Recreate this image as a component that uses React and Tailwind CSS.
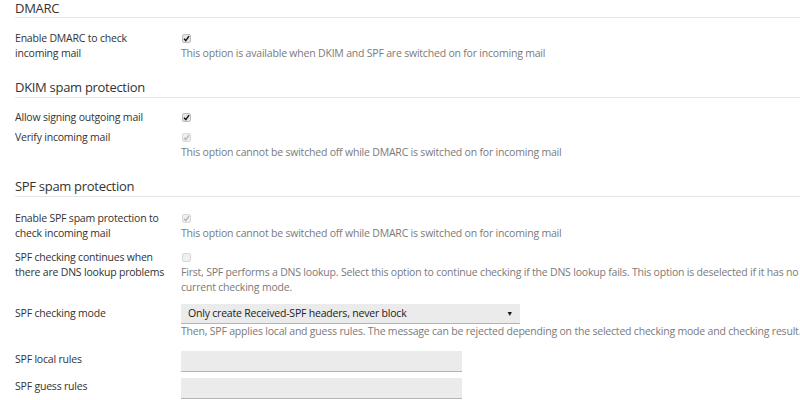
import React from "react";

function Check({ checked, disabled }) {
  return (
    <span
      className={`inline-flex items-center justify-center w-[9px] h-[9px] rounded-[2px] border ${
        disabled ? "border-[#d8d8d8] bg-[#f0f0f0]" : "border-[#bcbcbc] bg-[#e6e6e6]"
      }`}
    >
      {checked && (
        <svg width="7" height="7" viewBox="0 0 7 7">
          <path
            d="M1 3.8 L2.8 5.6 L6 1.2"
            fill="none"
            stroke={disabled ? "#b5b5b5" : "#111"}
            strokeWidth="1.4"
          />
        </svg>
      )}
    </span>
  );
}

function Heading({ children, className = "" }) {
  return (
    <div
      className={`ml-[15px] border-b border-[#e6e6e6] text-[13px] tracking-[-0.3px] text-[#333] ${className}`}
    >
      {children}
    </div>
  );
}

function Row({ label, children, className = "" }) {
  return (
    <div className={`flex pl-[15px] text-[10.5px] tracking-[-0.2px] leading-[15px] ${className}`}>
      <div className="w-[166px] shrink-0 text-[#333]">{label}</div>
      <div className="flex-1 min-w-0">{children}</div>
    </div>
  );
}

function Desc({ children }) {
  return <div className="text-[#7a7a7a] whitespace-nowrap">{children}</div>;
}

function CheckLine({ checked, disabled }) {
  return (
    <div className="h-[15px] flex items-center pl-[1px]">
      <Check checked={checked} disabled={disabled} />
    </div>
  );
}

export default function App() {
  return (
    <div
      className="w-[800px] h-[400px] overflow-hidden bg-white"
      style={{ fontFamily: '"Open Sans", "Liberation Sans", sans-serif' }}
    >
      <Heading className="leading-[17px] h-[18px]">DMARC</Heading>

      <Row label={<>Enable DMARC to check<br />incoming mail</>} className="mt-[13px]">
        <CheckLine checked />
        <Desc>This option is available when DKIM and SPF are switched on for incoming mail</Desc>
      </Row>

      <Heading className="leading-[20px] h-[21px] mt-[16px]">DKIM spam protection</Heading>

      <Row label="Allow signing outgoing mail" className="mt-[12px]">
        <CheckLine checked />
      </Row>
      <Row label="Verify incoming mail" className="mt-[5px]">
        <CheckLine checked disabled />
        <Desc>This option cannot be switched off while DMARC is switched on for incoming mail</Desc>
      </Row>

      <Heading className="leading-[20px] h-[21px] mt-[16px]">SPF spam protection</Heading>

      <Row label={<>Enable SPF spam protection to<br />check incoming mail</>} className="mt-[14px]">
        <CheckLine checked disabled />
        <Desc>This option cannot be switched off while DMARC is switched on for incoming mail</Desc>
      </Row>
      <Row label={<>SPF checking continues when<br />there are DNS lookup problems</>} className="mt-[9px]">
        <CheckLine disabled />
        <Desc>
          First, SPF performs a DNS lookup. Select this option to continue checking if the DNS lookup fails. This option is deselected if it has no effect in the
          <br />
          current checking mode.
        </Desc>
      </Row>

      <Row label={<div className="pt-[2px]">SPF checking mode</div>} className="mt-[9px]">
        <div className="w-[339px] h-[20px] bg-[#ebebeb] border-b border-[#b4b4b4] flex items-center justify-between pl-[7px] pr-[7px] text-[#222]">
          <span>Only create Received-SPF headers, never block</span>
          <span className="text-[7px] text-[#111]">▼</span>
        </div>
        <Desc>
          Then, SPF applies local and guess rules. The message can be rejected depending on the selected checking mode and checking result.
        </Desc>
      </Row>

      <Row label={<div className="pt-[1px]">SPF local rules</div>} className="mt-[12px]">
        <div className="w-[281px] h-[21px] bg-[#ebebeb] border-b border-[#b4b4b4]" />
      </Row>
      <Row label={<div className="pt-[1px]">SPF guess rules</div>} className="mt-[6px]">
        <div className="w-[281px] h-[21px] bg-[#ebebeb] border-b border-[#b4b4b4]" />
      </Row>
    </div>
  );
}
